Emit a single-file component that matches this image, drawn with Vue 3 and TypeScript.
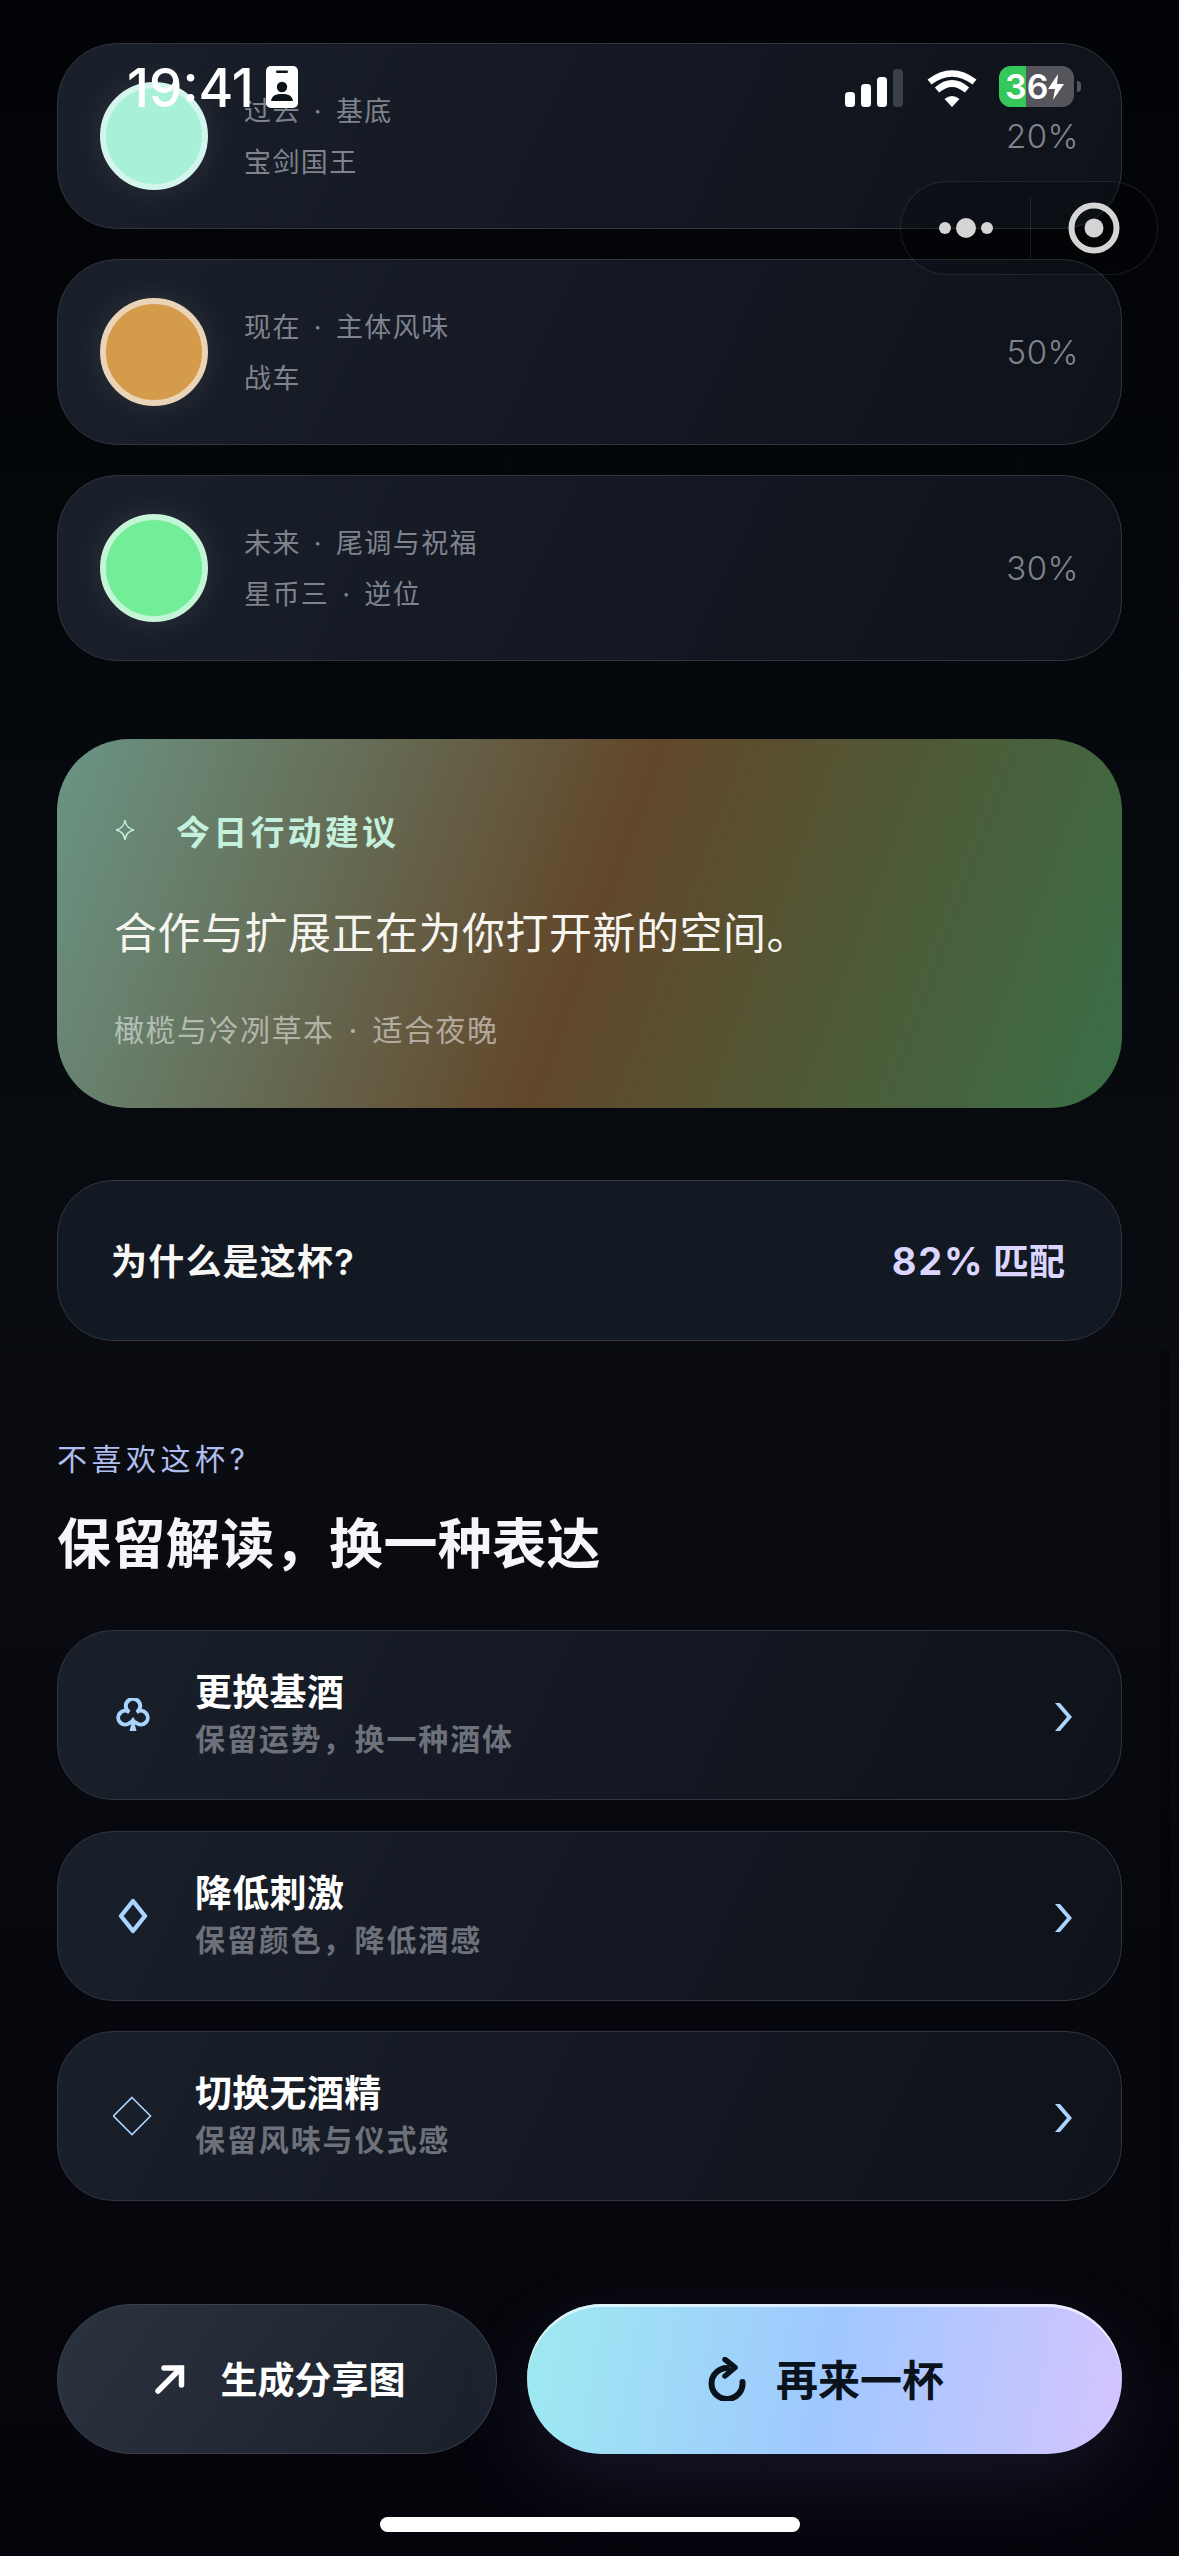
<script setup lang="ts">
interface Reading { id: string; kicker: string; name: string; pct: string }
interface Option { id: string; title: string; sub: string }

const readings: Reading[] = [
  { id: 'past', kicker: '过去 · 基底', name: '宝剑国王', pct: '20%' },
  { id: 'now', kicker: '现在 · 主体风味', name: '战车', pct: '50%' },
  { id: 'future', kicker: '未来 · 尾调与祝福', name: '星币三 · 逆位', pct: '30%' },
]

const options: Option[] = [
  { id: 'club', title: '更换基酒', sub: '保留运势\uFF0C换一种酒体' },
  { id: 'solid', title: '降低刺激', sub: '保留颜色\uFF0C降低酒感' },
  { id: 'thin', title: '切换无酒精', sub: '保留风味与仪式感' },
]
</script>

<template>
  <div class="screen">
    <main class="page">
      <section class="readings">
        <div v-for="r in readings" :key="r.id" class="card reading">
          <span class="orb" :class="r.id"></span>
          <div class="reading-text">
            <div>{{ r.kicker }}</div>
            <div>{{ r.name }}</div>
          </div>
          <span class="pct">{{ r.pct }}</span>
        </div>
      </section>

      <section class="advice">
        <div class="advice-title">
          <svg class="sparkle" width="20" height="22" viewBox="0 0 20 22">
            <path d="M10 1 C10.8 7 13 10 19 11 C13 12 10.8 15 10 21 C9.2 15 7 12 1 11 C7 10 9.2 7 10 1 Z" fill="none" stroke="#c4f0de" stroke-width="1.4" />
          </svg>
          <span>今日行动建议</span>
        </div>
        <div class="advice-main">合作与扩展正在为你打开新的空间。</div>
        <div class="advice-sub">橄榄与冷冽草本 · 适合夜晚</div>
      </section>

      <section class="card why">
        <span class="why-label">为什么是这杯?</span>
        <span class="why-score"><span class="why-num">82%</span> 匹配</span>
      </section>

      <div class="eyebrow">不喜欢这杯?</div>
      <h2 class="heading">保留解读&#xFF0C;换一种表达</h2>

      <section class="options">
        <div v-for="o in options" :key="o.id" class="card option">
          <span class="option-icon">
            <svg v-if="o.id === 'club'" width="36" height="34" viewBox="0 0 36 34">
              <path d="M14.3 14.2 A7.2 7.2 0 1 1 21.7 14.2 A6.9 6.9 0 1 1 21.5 25 Q19.5 24.6 18 22.5 Q16.5 24.6 14.5 25 A6.9 6.9 0 1 1 14.3 14.2 Z" fill="none" stroke="#a8d4ff" stroke-width="4" />
              <path d="M18 19 L21.5 33 H14.5 Z" fill="#a8d4ff" />
            </svg>
            <svg v-else-if="o.id === 'solid'" width="30" height="36" viewBox="0 0 30 36">
              <path d="M15 3 L27 18 L15 33 L3 18 Z" fill="none" stroke="#a8d4ff" stroke-width="4.4" stroke-linejoin="round" />
            </svg>
            <svg v-else width="40" height="40" viewBox="0 0 40 40">
              <path d="M19 1.5 L37.5 20 L19 38.5 L0.5 20 Z" fill="none" stroke="#a8d4ff" stroke-width="1.6" />
            </svg>
          </span>
          <div class="option-text">
            <div class="option-title">{{ o.title }}</div>
            <div class="option-sub">{{ o.sub }}</div>
          </div>
          <svg class="chevron" width="18" height="28" viewBox="0 0 18 28">
            <path d="M0 0 H5 L17 14 L5 28 H0 L12 14 Z" fill="#a8d4ff" />
          </svg>
        </div>
      </section>

      <section class="actions">
        <button class="btn share" type="button">
          <svg width="30" height="30" viewBox="0 0 30 30">
            <path d="M3 27 L26 4 M9 4 H26.5 V21" fill="none" stroke="#fff" stroke-width="5.5" stroke-linecap="round" stroke-linejoin="miter" />
          </svg>
          <span>生成分享图</span>
        </button>
        <button class="btn again" type="button">
          <svg width="38" height="44" viewBox="0 0 38 44">
            <path d="M19 11 A15.5 15.5 0 1 0 34.5 25" fill="none" stroke="#0a121c" stroke-width="6" stroke-linecap="round" />
            <path d="M17 2.5 L27 10.5 L17 19" fill="none" stroke="#0a121c" stroke-width="5.5" stroke-linecap="round" stroke-linejoin="round" />
          </svg>
          <span>再来一杯</span>
        </button>
      </section>
    </main>

    <div class="status">
      <div class="status-left">
        <span class="time">19:41</span>
        <svg width="32" height="42" viewBox="0 0 32 42">
          <rect width="32" height="42" rx="5" fill="#fff" />
          <rect x="10" y="4.5" width="12" height="2.6" rx="1.3" fill="#0d1118" />
          <circle cx="16" cy="21" r="5.2" fill="#0d1118" />
          <path d="M5 35 C6 29 10 28 16 28 C22 28 26 29 27 35 Z" fill="#0d1118" />
        </svg>
      </div>
      <div class="status-right">
        <svg class="signal" width="58" height="38" viewBox="0 0 58 38">
          <rect x="0" y="23" width="10" height="15" rx="3.5" fill="#fff" />
          <rect x="16" y="15" width="10" height="23" rx="3.5" fill="#fff" />
          <rect x="32" y="8" width="10" height="30" rx="3.5" fill="#fff" />
          <rect x="48" y="0" width="10" height="38" rx="3.5" fill="#3a3f48" />
        </svg>
        <svg class="wifi" width="50" height="38" viewBox="0 0 50 38">
          <path d="M25 38 L17.5 30 Q25 24 32.5 30 Z" fill="#fff" />
          <path d="M10 19 Q25 6 40 19" fill="none" stroke="#fff" stroke-width="6.5" transform="translate(0 2)" />
          <path d="M2.5 11 Q25 -6 47.5 11" fill="none" stroke="#fff" stroke-width="6.5" transform="translate(0 2)" />
        </svg>
        <div class="battery">
          <span class="battery-fill"></span>
          <span class="battery-num">36</span>
          <svg class="bolt" width="18" height="26" viewBox="0 0 18 26">
            <path d="M11 0 L1 15 H8 L6 26 L17 10 H10 Z" fill="#fff" />
          </svg>
          <span class="battery-tip"></span>
        </div>
      </div>
    </div>

    <div class="capsule">
      <div class="capsule-part dots">
        <i class="dot"></i><i class="dot big"></i><i class="dot"></i>
      </div>
      <span class="capsule-line"></span>
      <div class="capsule-part">
        <svg width="52" height="52" viewBox="0 0 52 52">
          <circle cx="26" cy="26" r="22.5" fill="none" stroke="#d4d4d4" stroke-width="6" />
          <circle cx="26" cy="26" r="9.5" fill="#d4d4d4" />
        </svg>
      </div>
    </div>

    <span class="scrollbar"></span>
    <span class="home"></span>
  </div>
</template>

<style>
html, body { margin: 0; background: #05060a; }
</style>

<style scoped>
.screen {
  position: relative;
  width: 1179px;
  height: 2556px;
  overflow: hidden;
  background: linear-gradient(180deg, #020306 0%, #05080c 30%, #0a0c11 55%, #07080d 75%, #05040b 100%);
  font-family: Inter, "Noto Sans CJK SC", sans-serif;
  color: #fff;
}
.page { display: flex; flex-direction: column; padding: 43px 57px 0; }
.card {
  box-sizing: border-box;
  border: 1.5px solid #2f3640;
  background: linear-gradient(115deg, #1a202a 0%, #141924 45%, #0e1219 100%);
}
.readings { display: flex; flex-direction: column; gap: 30px; }
.reading {
  display: flex;
  align-items: center;
  height: 186px;
  padding: 0 42px;
  border-radius: 60px;
}
.orb {
  flex: none;
  box-sizing: border-box;
  width: 108px;
  height: 108px;
  border-radius: 50%;
  border: 6px solid;
  box-shadow: 0 0 36px rgba(255, 255, 255, 0.09);
}
.orb.past { background: #a9f0d8; border-color: #d4f5ee; }
.orb.now { background: #d49b4a; border-color: #ead3b6; }
.orb.future { background: #72ee98; border-color: #c3f5d6; }
.reading-text {
  flex: 1;
  margin-left: 36px;
  padding-top: 2px;
  font-size: 27px;
  line-height: 51px;
  letter-spacing: 1.4px;
  word-spacing: 4px;
  color: #7f838d;
}
.pct { font-size: 33px; font-weight: 300; letter-spacing: 0.5px; color: #7f838d; }

.advice {
  box-sizing: border-box;
  height: 369px;
  margin-top: 78px;
  padding: 69px 57px 0;
  border-radius: 72px;
  background: linear-gradient(110deg, #6a9585 0%, #62472a 50%, #396f46 100%);
}
.advice-title {
  display: flex;
  align-items: center;
  height: 44px;
  font-size: 34px;
  font-weight: 700;
  letter-spacing: 3.2px;
  color: #c4f0de;
}
.sparkle { margin-left: 1px; margin-right: 41px; }
.advice-main {
  margin-top: 51px;
  font-size: 43px;
  line-height: 60px;
  letter-spacing: 0.5px;
  color: #f6f5ef;
}
.advice-sub {
  margin-top: 45px;
  font-size: 30px;
  line-height: 44px;
  letter-spacing: 1.5px;
  word-spacing: 4px;
  color: rgba(255, 255, 255, 0.5);
}

.why {
  display: flex;
  align-items: center;
  justify-content: space-between;
  height: 161px;
  margin-top: 72px;
  padding: 0 56px 4px 53px;
  border-radius: 56px;
  background: #121923;
}
.why-label { font-size: 36px; font-weight: 600; letter-spacing: 1.2px; color: #f7f7f5; }
.why-score { font-size: 36px; font-weight: 700; color: #dcd5ff; }
.why-num { font-size: 38px; letter-spacing: 1.8px; }

.eyebrow {
  margin-top: 98px;
  font-size: 30px;
  line-height: 40px;
  letter-spacing: 4.5px;
  color: #afbeee;
}
.heading {
  margin: 31px 0 0;
  font-size: 54px;
  line-height: 70px;
  font-weight: 700;
  letter-spacing: 0.4px;
  color: #f6f6fa;
}

.options { display: flex; flex-direction: column; gap: 30.5px; margin-top: 50px; }
.option {
  display: flex;
  align-items: center;
  height: 170px;
  padding: 0 48px 0 48px;
  border-radius: 56px;
}
.option-icon { display: flex; align-items: center; justify-content: center; flex: none; width: 54px; }
.option-text { flex: 1; margin-left: 35px; }
.option-title { font-size: 37px; line-height: 48px; font-weight: 600; letter-spacing: 0.3px; color: #fff; }
.option-sub { font-size: 30px; line-height: 44px; font-weight: 600; letter-spacing: 1.9px; color: #6c717b; }
.chevron { flex: none; margin-top: 4px; }

.actions { display: flex; gap: 30px; margin-top: 103px; }
.btn {
  display: flex;
  align-items: center;
  justify-content: center;
  box-sizing: border-box;
  height: 150px;
  border-radius: 75px;
  font-family: inherit;
}
.btn span { margin-top: -3px; }
.share {
  width: 440px;
  gap: 36px;
  padding: 0 0 0 6px;
  border: 1.5px solid #3a414c;
  background: linear-gradient(125deg, #2b333f 0%, #1a202a 100%);
  color: #fff;
  font-size: 37px;
  font-weight: 600;
}
.again {
  flex: 1;
  gap: 30px;
  padding: 0 0 0 3px;
  border: 0;
  background: linear-gradient(100deg, #9eeaf0 0%, #a0c8ff 50%, #d4c4ff 100%);
  box-shadow: inset 0 3px 0 rgba(255, 255, 255, 0.65), 0 30px 90px rgba(170, 160, 255, 0.11);
  color: #0a121c;
  font-size: 42px;
  font-weight: 700;
}

.status {
  position: absolute;
  top: 66px;
  left: 127px;
  right: 105px;
  display: flex;
  align-items: flex-start;
  justify-content: space-between;
}
.status-left { display: flex; align-items: flex-start; gap: 12px; }
.time { font-size: 53px; line-height: 44px; font-weight: 500; letter-spacing: 0; }
.status-right { display: flex; align-items: flex-start; }
.signal { margin-top: 3px; }
.wifi { margin-top: 3px; margin-left: 24px; }
.battery {
  position: relative;
  display: flex;
  align-items: center;
  box-sizing: border-box;
  width: 75px;
  height: 41px;
  margin-left: 22px;
  padding-left: 6px;
  border-radius: 12px;
  background: #54565c;
  overflow: visible;
}
.battery-fill {
  position: absolute;
  inset: 0 48px 0 0;
  border-radius: 12px 0 0 12px;
  background: #34c759;
}
.battery-num { position: relative; font-size: 34px; font-weight: 600; line-height: 41px; letter-spacing: 0; }
.bolt { position: relative; margin-left: -1px; flex: none; }
.battery-tip {
  position: absolute;
  left: 78px;
  top: 15px;
  width: 4px;
  height: 11px;
  border-radius: 0 5px 5px 0;
  background: #54565c;
}

.capsule {
  position: absolute;
  top: 181px;
  left: 900px;
  display: flex;
  align-items: center;
  box-sizing: border-box;
  width: 258px;
  height: 94px;
  border: 1px solid rgba(255, 255, 255, 0.09);
  border-radius: 47px;
  background: rgba(0, 0, 0, 0.2);
}
.capsule-part { display: flex; flex: 1; align-items: center; justify-content: center; }
.dots { gap: 5px; padding-left: 2px; }
.dot { width: 12px; height: 12px; border-radius: 50%; background: #d4d4d4; }
.dot.big { width: 20px; height: 20px; }
.capsule-line { width: 1px; height: 60px; background: rgba(255, 255, 255, 0.1); }

.scrollbar {
  position: absolute;
  right: 9px;
  top: 1350px;
  width: 10px;
  height: 1020px;
  border-radius: 5px;
  background: rgba(0, 0, 0, 0.28);
}
.home {
  position: absolute;
  left: 380px;
  top: 2517px;
  width: 420px;
  height: 15px;
  border-radius: 8px;
  background: #fff;
}
</style>
